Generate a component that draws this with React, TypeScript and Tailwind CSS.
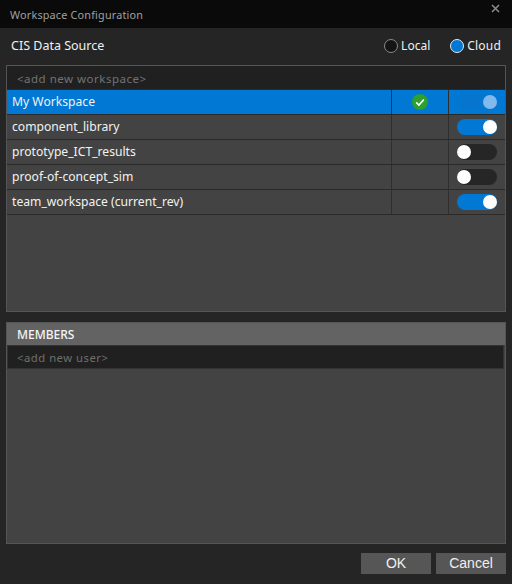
import React from "react";

const font = { fontFamily: '"Noto Sans", "Open Sans", sans-serif' };

function Toggle({ on, faded }: { on: boolean; faded?: boolean }) {
  if (faded) {
    return (
      <div className="flex h-[16px] w-[40px] items-center justify-end rounded-full bg-[#0675cd]">
        <div className="h-[14px] w-[14px] rounded-full bg-[#82b9ec]" />
      </div>
    );
  }
  return (
    <div className={`flex h-[16px] w-[40px] items-center rounded-full ${on ? "justify-end bg-[#0078d4]" : "justify-start bg-[#262626]"}`}>
      <div className="h-[14px] w-[14px] rounded-full bg-white" />
    </div>
  );
}

function Row({ name, on, selected }: { name: string; on: boolean; selected?: boolean }) {
  return (
    <div className={`flex h-[25px] border-b border-[#2a2a2a] ${selected ? "bg-[#0078d4]" : ""}`}>
      <div className="flex w-[384px] items-center pl-[5px] text-[12.15px] text-[#f2f2f2]">{name}</div>
      <div className="flex w-[57px] items-center justify-center border-l border-[#2f2f2f]">
        {selected && (
          <svg width="16" height="16" viewBox="0 0 16 16">
            <circle cx="8" cy="8" r="8" fill="#2ea02e" />
            <path d="M4.2 8.4 L6.9 11 L11.8 5.6" fill="none" stroke="#fff" strokeWidth="1.6" />
          </svg>
        )}
      </div>
      <div className="flex flex-1 items-center justify-center border-l border-[#2f2f2f]">
        <Toggle on={on} faded={selected} />
      </div>
    </div>
  );
}

export default function App() {
  return (
    <div style={font} className="flex h-[584px] w-[512px] flex-col bg-[#252525] text-[#f0f0f0]">
      <div className="flex h-[28px] items-center justify-between bg-[#0a0a0a] pl-[10px] pr-[12px] pt-[3px]">
        <span className="text-[10.8px] tracking-[0.2px] text-[#a0a0a0]">Workspace Configuration</span>
        <svg width="9" height="9" viewBox="0 0 9 9" className="mb-[14px]">
          <path d="M1 1 L8 8 M8 1 L1 8" stroke="#8c8c8c" strokeWidth="1.5" />
        </svg>
      </div>
      <div className="flex h-[37px] items-center justify-between pl-[11px] pr-[11px]">
        <span className="text-[12.5px]">CIS Data Source</span>
        <div className="mb-[1px] flex items-center gap-[20px] text-[12px]">
          <label className="flex items-center gap-[3px]">
            <span className="h-[14px] w-[14px] rounded-full border border-[#8a8a8a] bg-[#141414]" />
            <span>Local</span>
          </label>
          <label className="flex items-center gap-[3px]">
            <span className="h-[14px] w-[14px] rounded-full border border-[#e8e8e8] bg-[#0078d4]" />
            <span className="tracking-[0.2px]">Cloud</span>
          </label>
        </div>
      </div>
      <div className="mx-[6px] h-[247px] border border-[#555555] bg-[#434343]">
        <div className="flex h-[24px] items-center border-b border-[#2a2a2a] bg-[#202020] pl-[10px] pt-[2px] text-[11.5px] tracking-[0.5px] text-[#737373]">
          &lt;add new workspace&gt;
        </div>
        <Row name="My Workspace" on selected />
        <Row name="component_library" on />
        <Row name="prototype_ICT_results" on={false} />
        <Row name="proof-of-concept_sim" on={false} />
        <Row name="team_workspace (current_rev)" on />
      </div>
      <div className="mx-[6px] mt-[10px] flex h-[222px] flex-col border border-[#555555] bg-[#434343]">
        <div className="flex h-[22px] items-center bg-[#636363] pl-[10px] pt-[2px] text-[12px] font-medium text-[#f5f5f5]">MEMBERS</div>
        <div className="mr-[1px] flex h-[24px] items-center border border-[#333333] bg-[#202020] pl-[9px] pt-[2px] text-[11.3px] tracking-[0.5px] text-[#6f6f6f]">
          &lt;add new user&gt;
        </div>
      </div>
      <div className="mr-[6px] mt-[9px] flex justify-end gap-[5px]" style={{ fontFamily: '"Liberation Sans", sans-serif' }}>
        <button className="h-[21px] w-[70px] bg-[#565656] text-[14px] text-[#f0f0f0]">OK</button>
        <button className="h-[21px] w-[70px] bg-[#565656] text-[14px] text-[#f0f0f0]">Cancel</button>
      </div>
    </div>
  );
}
